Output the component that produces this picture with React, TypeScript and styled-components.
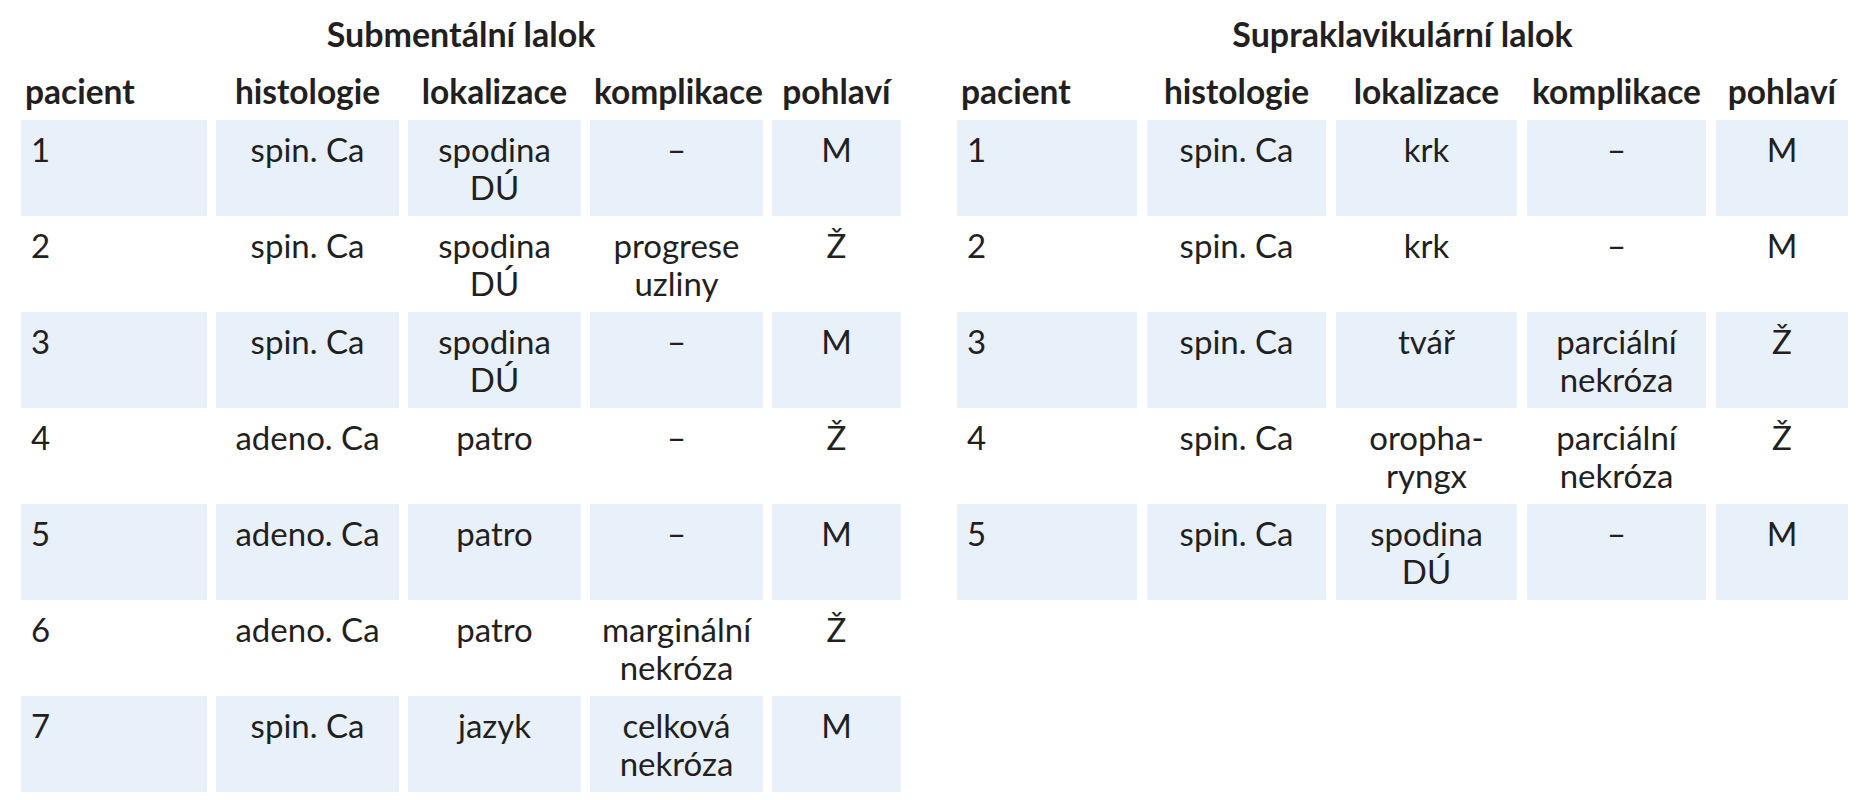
import React from 'react';
import styled, { createGlobalStyle } from 'styled-components';

const GlobalStyle = createGlobalStyle`
  body {
    margin: 0;
    background: #fff;
    font-family: Lato, "Open Sans", sans-serif;
    color: #231f20;
  }
`;

const Page = styled.div`
  display: flex;
  gap: 56px;
  padding: 15px 0 0 21px;
`;

const TablePanel = styled.section<{ $width: number }>`
  width: ${(p) => p.$width}px;
  display: flex;
  flex-direction: column;
`;

const Title = styled.h2`
  margin: 0 0 19px;
  font-size: 34px;
  line-height: 38px;
  font-weight: 700;
  text-align: center;
`;

const Row = styled.div<{ $cols: string; $gap: number; $header?: boolean }>`
  display: grid;
  grid-template-columns: ${(p) => p.$cols};
  column-gap: ${(p) => p.$gap}px;
  height: ${(p) => (p.$header ? 48 : 96)}px;
`;

const Cell = styled.div<{ $shaded?: boolean; $left?: boolean; $header?: boolean }>`
  background: ${(p) => (p.$shaded ? '#e8f0fa' : 'transparent')};
  padding: ${(p) => (p.$header ? '0 4px' : '10px 10px 0')};
  text-align: ${(p) => (p.$left ? 'left' : 'center')};
  font-size: ${(p) => (p.$header ? 33.5 : 33)}px;
  line-height: 38px;
  font-weight: ${(p) => (p.$header ? 700 : 400)};
  white-space: nowrap;
`;

const headers = ['pacient', 'histologie', 'lokalizace', 'komplikace', 'pohlaví'];

type Line = string[];

const submental: Line[][] = [
  [['1'], ['spin. Ca'], ['spodina', 'DÚ'], ['–'], ['M']],
  [['2'], ['spin. Ca'], ['spodina', 'DÚ'], ['progrese', 'uzliny'], ['Ž']],
  [['3'], ['spin. Ca'], ['spodina', 'DÚ'], ['–'], ['M']],
  [['4'], ['adeno. Ca'], ['patro'], ['–'], ['Ž']],
  [['5'], ['adeno. Ca'], ['patro'], ['–'], ['M']],
  [['6'], ['adeno. Ca'], ['patro'], ['marginální', 'nekróza'], ['Ž']],
  [['7'], ['spin. Ca'], ['jazyk'], ['celková', 'nekróza'], ['M']],
];

const supraclavicular: Line[][] = [
  [['1'], ['spin. Ca'], ['krk'], ['–'], ['M']],
  [['2'], ['spin. Ca'], ['krk'], ['–'], ['M']],
  [['3'], ['spin. Ca'], ['tvář'], ['parciální', 'nekróza'], ['Ž']],
  [['4'], ['spin. Ca'], ['oropha-', 'ryngx'], ['parciální', 'nekróza'], ['Ž']],
  [['5'], ['spin. Ca'], ['spodina', 'DÚ'], ['–'], ['M']],
];

interface FlapTableProps {
  title: string;
  width: number;
  cols: string;
  gap: number;
  rows: Line[][];
}

const FlapTable: React.FC<FlapTableProps> = ({ title, width, cols, gap, rows }) => (
  <TablePanel $width={width}>
    <Title>{title}</Title>
    <Row $cols={cols} $gap={gap} $header>
      {headers.map((h, i) => (
        <Cell key={h} $header $left={i === 0}>
          {h}
        </Cell>
      ))}
    </Row>
    {rows.map((row, r) => (
      <Row key={r} $cols={cols} $gap={gap}>
        {row.map((lines, c) => (
          <Cell key={c} $shaded={r % 2 === 0} $left={c === 0}>
            {lines.map((l, k) => (
              <div key={k}>{l}</div>
            ))}
          </Cell>
        ))}
      </Row>
    ))}
  </TablePanel>
);

const App: React.FC = () => (
  <>
    <GlobalStyle />
    <Page>
      <FlapTable
        title="Submentální lalok"
        width={880}
        cols="186px 183px 173px 173px 129px"
        gap={9}
        rows={submental}
      />
      <FlapTable
        title="Supraklavikulární lalok"
        width={891}
        cols="180px 179px 181px 179px 132px"
        gap={10}
        rows={supraclavicular}
      />
    </Page>
  </>
);

export default App;
